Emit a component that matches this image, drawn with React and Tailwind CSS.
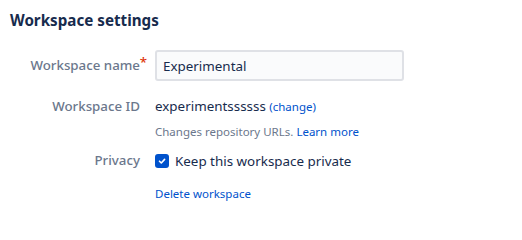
import React from 'react';

const Label = ({ children, required }) => (
  <div className="w-[130px] shrink-0 text-right text-[13.3px] font-medium text-[#6b778c]">
    <span className="relative">
      {children}
      {required && <span className="absolute -right-[7px] -top-[3px] text-[#de350b]">*</span>}
    </span>
  </div>
);

export default function App() {
  return (
    <div className="w-[522px] h-[225px] bg-white px-[10px] pt-[10px] text-[#172b4d]" style={{ fontFamily: '"Noto Sans", "Open Sans", sans-serif' }}>
      <h2 className="text-[15.2px] font-bold leading-[21px]">Workspace settings</h2>

      <div className="mt-[19px] flex items-center">
        <Label required>Workspace name</Label>
        <input
          defaultValue="Experimental"
          className="ml-[15px] h-[31px] w-[249px] rounded-[3px] border-2 border-[#dfe1e6] bg-[#fafbfc] px-[6px] text-[13.4px] text-[#172b4d] outline-none"
        />
      </div>

      <div className="mt-[15px] flex items-baseline">
        <Label>Workspace ID</Label>
        <div className="ml-[15px] text-[13.4px]">
          experimentssssss <a href="#" className="text-[11.5px] text-[#0052cc]">(change)</a>
        </div>
      </div>
      <div className="ml-[145px] mt-[6px] text-[11.5px] text-[#6b778c]">
        Changes repository URLs. <a href="#" className="text-[#0052cc]">Learn more</a>
      </div>

      <div className="mt-[11px] flex items-center">
        <Label>Privacy</Label>
        <label className="ml-[15px] flex items-center gap-[6px] text-[13.4px]">
          <span className="flex h-[14px] w-[14px] items-center justify-center rounded-[3px] bg-[#0052cc]">
            <svg width="10" height="10" viewBox="0 0 10 10" fill="none">
              <path d="M2.5 5.2 L4.3 7 L7.6 3.4" stroke="white" strokeWidth="1.6" strokeLinecap="round" strokeLinejoin="round" />
            </svg>
          </span>
          Keep this workspace private
        </label>
      </div>

      <div className="ml-[145px] mt-[14px] text-[11.5px]">
        <a href="#" className="text-[#0052cc]">Delete workspace</a>
      </div>
    </div>
  );
}
